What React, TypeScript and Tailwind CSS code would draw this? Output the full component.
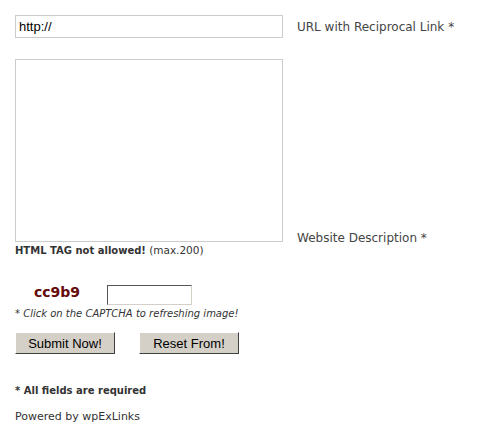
import React from "react";

const verdana = "font-['Verdana','DejaVu_Sans',sans-serif]";

export default function App() {
  return (
    <div className={`w-[478px] h-[434px] bg-white pl-[15px] pt-[15px] text-[#333] ${verdana}`}>
      {/* URL row */}
      <div className="flex items-center">
        <input
          type="text"
          defaultValue="http://"
          className="w-[268px] h-[23px] border border-[#cccccc] px-[3px] text-[13px] text-black font-['Liberation_Sans',Arial,sans-serif] outline-none"
        />
        <span className="ml-[14px] text-[12px] text-[#444]">URL with Reciprocal Link *</span>
      </div>

      {/* Description row */}
      <div className="mt-[21px] flex items-end">
        <textarea className="w-[268px] h-[183px] border border-[#cccccc] resize-none outline-none block" />
        <span className="ml-[14px] mb-[-5px] text-[12px] text-[#444]">Website Description *</span>
      </div>
      <div className="mt-[1px] text-[10px] leading-[14px]">
        <span className="font-bold">HTML TAG not allowed!</span> <span className="text-[10.5px]">(max.200)</span>
      </div>

      {/* Captcha */}
      <div className="mt-[27px] flex items-start">
        <span className="ml-[19px] text-[14px] font-bold text-[#660a0a] leading-[15px]">cc9b9</span>
        <input
          type="text"
          className="ml-[27px] w-[85px] h-[20px] border border-t-[#555] border-l-[#555] border-b-[#d4d0c8] border-r-[#d4d0c8] outline-none"
        />
      </div>
      <div className="mt-[2px] text-[10px] italic leading-[14px]">* Click on the CAPTCHA to refreshing image!</div>

      {/* Buttons */}
      <div className="mt-[11px] flex gap-[24px] font-['Liberation_Sans',Arial,sans-serif]">
        <button className="w-[100px] h-[22px] bg-[#d4d0c8] border border-t-white border-l-white border-b-[#404040] border-r-[#404040] text-[13px] text-black leading-none">
          Submit Now!
        </button>
        <button className="w-[100px] h-[22px] bg-[#d4d0c8] border border-t-white border-l-white border-b-[#404040] border-r-[#404040] text-[13px] text-black leading-none">
          Reset From!
        </button>
      </div>

      <div className="mt-[30px] text-[10px] font-bold leading-[14px]">* All fields are required</div>
      <div className="mt-[12px] text-[11px] leading-[14px]">Powered by wpExLinks</div>
    </div>
  );
}
